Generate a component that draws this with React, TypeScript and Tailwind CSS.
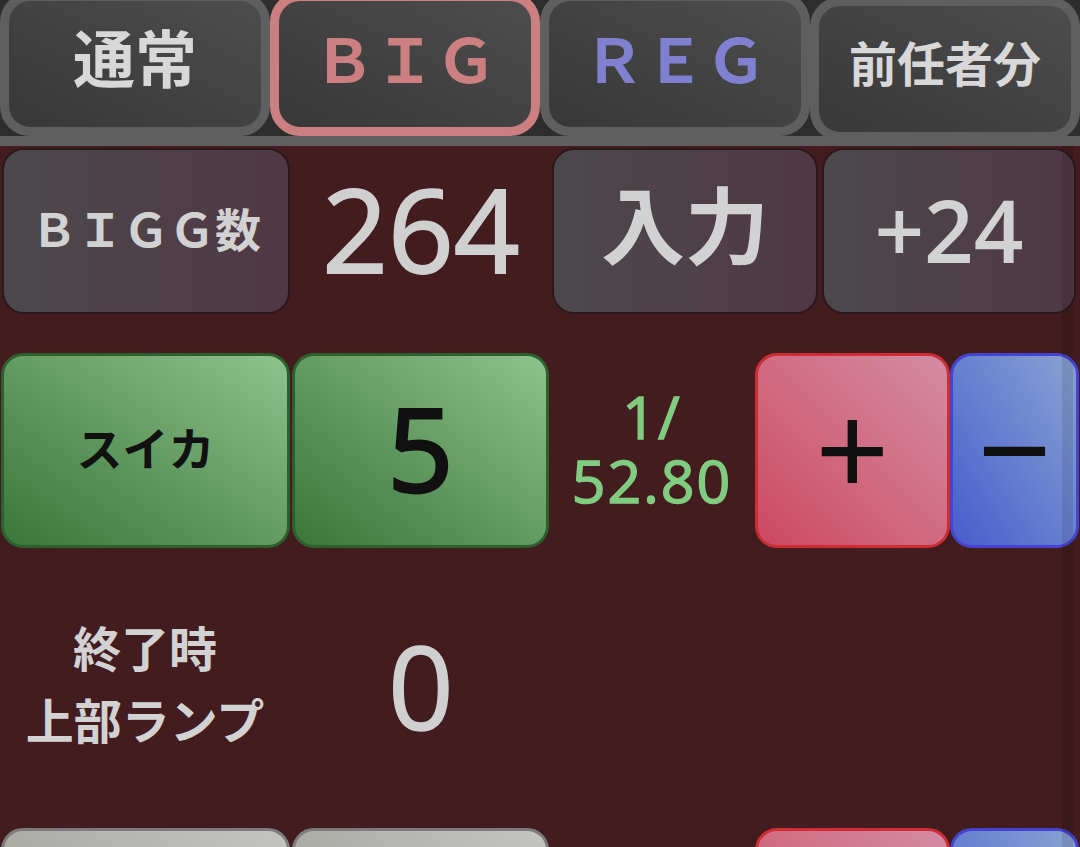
import React from "react";

const Tab = ({ children, className = "", color = "border-[#5f5f5f]" }: { children: React.ReactNode; className?: string; color?: string }) => (
  <div
    className={`w-[270px] h-[144px] shrink-0 rounded-[30px] border-[9px] ${color} bg-linear-to-tr from-[#383838] to-[#4d4d4d] flex items-center justify-center pb-[10px] ${className}`}
  >
    {children}
  </div>
);

const DarkBtn = ({ children, className = "" }: { children: React.ReactNode; className?: string }) => (
  <div
    className={`h-full shrink-0 rounded-[22px] border-2 border-[#2a181c] bg-linear-to-r from-[#4b494c] to-[#503844] flex items-center justify-center text-[#d2d2d2] ${className}`}
  >
    {children}
  </div>
);

const GreenBtn = ({ children, className = "" }: { children: React.ReactNode; className?: string }) => (
  <div
    className={`h-full shrink-0 rounded-[22px] border-[3px] border-[#2e5f2e] bg-linear-to-tr from-[#3a763a] to-[#8dc38d] flex items-center justify-center text-[#111111] ${className}`}
  >
    {children}
  </div>
);

const GrayBtn = ({ className = "" }: { className?: string }) => (
  <div
    className={`h-full shrink-0 rounded-[22px] border-[3px] border-[#7c7c7c] bg-linear-to-tr from-[#96968e] to-[#c4c4c2] ${className}`}
  />
);

const PlusBtn = ({ children }: { children?: React.ReactNode }) => (
  <div className="h-full w-[195px] shrink-0 rounded-[22px] border-[3px] border-[#cc2e34] bg-linear-to-tr from-[#cc4760] to-[#d28ca4] flex items-center justify-center">
    {children}
  </div>
);

const MinusBtn = ({ children }: { children?: React.ReactNode }) => (
  <div className="h-full w-[129px] shrink-0 rounded-[22px] border-[3px] border-[#4444d0] bg-linear-to-tr from-[#4a5ccc] to-[#8aa2d2] flex items-center justify-center">
    {children}
  </div>
);

const NUM = "font-['Open_Sans','Noto_Sans',sans-serif]";

export default function App() {
  return (
    <div className="relative w-[1080px] h-[847px] overflow-hidden bg-[#421c1f] font-['Noto_Sans','Noto_Sans_CJK_JP',sans-serif]">
      <header className="h-[136px] bg-[#2d2d2d] flex">
        <Tab className="-mt-[8px]">
          <span className="text-[62px] font-bold text-[#d8d8d8] leading-none">通常</span>
        </Tab>
        <Tab className="-mt-[8px]" color="border-[#cc7f80]">
          <span className="text-[61px] font-bold text-[#cc7f80] leading-none">ＢＩＧ</span>
        </Tab>
        <Tab className="-mt-[8px]">
          <span className="text-[61px] font-bold text-[#8080d0] leading-none">ＲＥＧ</span>
        </Tab>
        <Tab className="-mt-[3px]">
          <span className="text-[48px] font-bold text-[#d8d8d8] leading-none">前任者分</span>
        </Tab>
      </header>
      <div className="h-[10px] bg-[#5f5f5f] relative z-10" />

      <main className="pt-[2px]">
        <div className="flex h-[166px]">
          <DarkBtn className="ml-[2px] w-[288px] pb-[4px]">
            <span className="text-[46px] font-bold leading-none">ＢＩＧＧ数</span>
          </DarkBtn>
          <div className={`w-[262px] shrink-0 flex items-center justify-center text-[115px] text-[#d0d0d0] leading-none pb-[6px] [-webkit-text-stroke:2px_#d0d0d0] ${NUM}`}>
            264
          </div>
          <DarkBtn className="w-[266px] pb-[10px]">
            <span className="text-[84px] font-bold leading-none">入力</span>
          </DarkBtn>
          <DarkBtn className="ml-[4px] w-[254px] pb-[4px]">
            <span className={`text-[87px] font-semibold leading-none ${NUM}`}>+24</span>
          </DarkBtn>
        </div>

        <div className="flex h-[195px] mt-[39px]">
          <GreenBtn className="ml-[1px] w-[289px] pb-[6px]">
            <span className="text-[46px] font-bold leading-none">スイカ</span>
          </GreenBtn>
          <GreenBtn className="ml-[2px] w-[257px] pb-[6px]">
            <span className={`text-[115px] leading-none [-webkit-text-stroke:3px_#111111] ${NUM}`}>5</span>
          </GreenBtn>
          <div className={`w-[206px] shrink-0 flex flex-col items-center justify-center text-[#80cc80] text-[59px] tracking-[2px] leading-[64px] pb-[6px] [-webkit-text-stroke:1.5px_#80cc80] ${NUM}`}>
            <span>1/</span>
            <span>52.80</span>
          </div>
          <PlusBtn>
            <span className="text-[130px] leading-none text-[#111111] pb-[8px]">+</span>
          </PlusBtn>
          <MinusBtn>
            <span className="text-[130px] leading-none text-[#111111] pb-[8px]">−</span>
          </MinusBtn>
        </div>

        <div className="flex h-[280px] items-center">
          <div className="w-[290px] shrink-0 flex flex-col items-center text-[48px] font-bold text-[#d2d2d2] leading-[72px] pb-[6px]">
            <span>終了時</span>
            <span>上部ランプ</span>
          </div>
          <div className={`w-[262px] shrink-0 flex items-center justify-center text-[115px] text-[#d0d0d0] leading-none pb-[6px] [-webkit-text-stroke:1.5px_#d0d0d0] ${NUM}`}>
            0
          </div>
        </div>

        <div className="flex h-[195px]">
          <GrayBtn className="ml-[1px] w-[289px]" />
          <GrayBtn className="ml-[2px] w-[257px]" />
          <div className="w-[206px] shrink-0" />
          <PlusBtn />
          <MinusBtn />
        </div>
      </main>

      <div className="absolute right-[7px] top-[146px] bottom-0 w-[11px] bg-black/10" />
    </div>
  );
}
